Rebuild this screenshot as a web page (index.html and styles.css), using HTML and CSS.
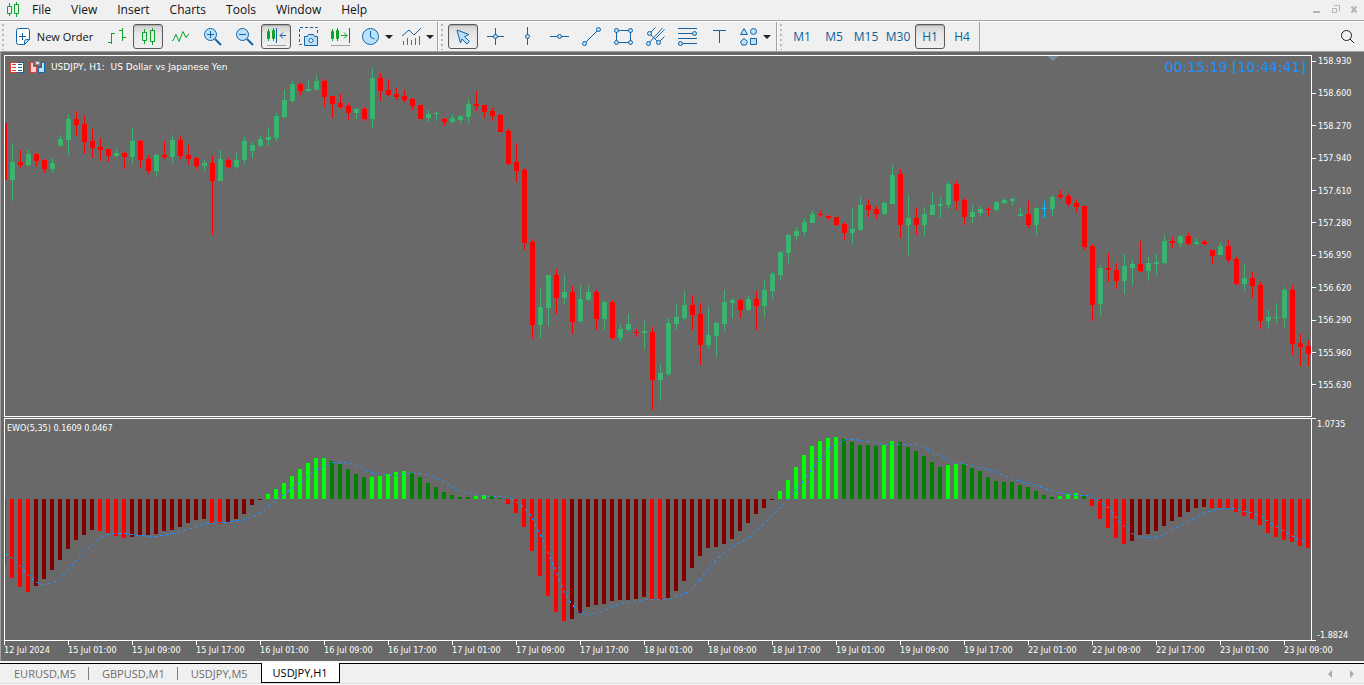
FILE: index.html
```html
<!DOCTYPE html>
<html lang="en">
<head>
<meta charset="utf-8">
<title>USDJPY, H1</title>
<link rel="stylesheet" href="styles.css">
</head>
<body>
<header class="menubar">
  <svg class="app-icon" width="14" height="15" viewBox="0 0 14 15"><path class="g" d="M3.5 1v3M3.5 12v2M10.5 0v2M10.5 12v3M1.5 4.5h4v7h-4zM8.500 2.500h4v9h-4z"/></svg>
  <nav class="menu">
    <button>File</button><button>View</button><button>Insert</button><button>Charts</button><button>Tools</button><button>Window</button><button>Help</button>
  </nav>
  <div class="window-controls">
    <button aria-label="Minimize"><svg width="9" height="9"><path d="M1 7h7" stroke-width="2"/></svg></button>
    <button aria-label="Restore"><svg width="9" height="9"><path d="M3 .5h5.500v6M1.500 3.500h4v4h-4z" /></svg></button>
    <button aria-label="Close"><svg width="9" height="9"><path d="M1.500 1.500l5 6M6.500 1.500l-5 6" stroke-width="2"/></svg></button>
  </div>
</header>

<div class="toolbar">
  <div class="group">
    <span class="grip"></span>
    <button class="tool new-order"><svg width="16" height="19" viewBox="0 0 16 19"><path class="b w" d="M3.500 1.500h9a2 2 0 0 1 2 2v9l-5 5h-6a2 2 0 0 1-2-2v-12a2 2 0 0 1 2-2z"/><path class="b f" d="M14.500 12.500h-3a2 2 0 0 0-2 2v3z"/><path class="b" d="M7.500 6v7M4 9.500h7"/></svg>New Order</button>
    <button class="tool" aria-label="Bar chart"><svg width="28" height="23"><path class="g" d="M9.500 8v11M6 17.500h3M10 8.500h3M20.500 3v13M17 5.500h3M21 12.500h3"/></svg></button>
    <button class="tool on" aria-label="Candlesticks"><svg width="28" height="23"><path class="g" d="M10.500 4v3M10.500 16v3M18.500 3v2M18.500 17v3M8.500 7.500h4v8h-4zM16.500 5.500h4v11h-4z"/></svg></button>
    <button class="tool" aria-label="Line chart"><svg width="28" height="23"><path class="g" d="M6 15.500h1l3-6 3 7 4-10 3 6 2-3h1"/></svg></button>
    <button class="tool" aria-label="Zoom in"><svg width="28" height="23"><path class="b t" d="M17 14l6 6"/><circle class="b f" cx="12.500" cy="9.500" r="6"/><path class="b" d="M9 9.500h7M12.500 6v7"/></svg></button>
    <button class="tool" aria-label="Zoom out"><svg width="28" height="23"><path class="b t" d="M17 14l6 6"/><circle class="b f" cx="12.500" cy="9.500" r="6"/><path class="b" d="M9 9.500h7"/></svg></button>
    <button class="tool on" aria-label="Auto scroll"><svg width="28" height="23"><path class="g" d="M6.500 4v12M11.500 3v13M5.500 6.500h2v7h-2zM10.500 5.500h2v8h-2z"/><path class="b" d="M14.500 3v15M18 10.500h6M21 7.500l-3 3 3 3"/><path class="line" d="M5 20.500h19"/></svg></button>
    <button class="tool" aria-label="Screenshot"><svg width="28" height="23"><path class="b dash" d="M23.500 8V2.500h-18v17H10"/><path class="b f" d="M10.500 11.500h3l1-2h5l1 2h3v9h-13z"/><circle class="b w" cx="17" cy="15.500" r="2"/></svg></button>
    <button class="tool" aria-label="Chart shift"><svg width="28" height="23"><path class="g" d="M6.500 4v12M11.500 3v13M5.500 6.500h2v7h-2zM10.500 5.500h2v8h-2zM15 10.500h6M18 7.500l3 3-3 3"/><path class="b" d="M23.500 3v15"/><path class="line" d="M5 20.500h19"/></svg></button>
    <button class="tool wide" aria-label="Periods"><svg width="36" height="23"><circle class="b f" cx="12.500" cy="11.500" r="8"/><path class="b" d="M12.500 6v6l4 2"/><path class="drop" d="M27 10h8l-4 4z"/></svg></button>
    <button class="tool wide" aria-label="Indicators"><svg width="36" height="23"><path class="b" d="M4 11l7-6 5 5 7-7"/><path class="g" d="M5.500 16v4M9.500 13v7M13.500 15v5M17.500 13v7M21.500 11v9"/><path class="drop" d="M28 10h8l-4 4z"/></svg></button>
  </div>
  <div class="group">
    <span class="grip"></span>
    <button class="tool on" aria-label="Cursor"><svg width="28" height="23"><path class="b f" d="M8 5l12 4.500-4.500 2 5 5-2.500 2.500-5-5-1.500 4z"/></svg></button>
    <button class="tool" aria-label="Crosshair"><svg width="28" height="23"><path class="b" d="M14.500 3v17M6 11.500h17"/><circle class="b f" cx="14.500" cy="11.500" r="2"/></svg></button>
    <button class="tool" aria-label="Vertical line"><svg width="28" height="23"><path class="b" d="M14.500 2v18"/><circle class="b f" cx="14.500" cy="11.500" r="2"/></svg></button>
    <button class="tool" aria-label="Horizontal line"><svg width="28" height="23"><path class="b" d="M5 11.500h19"/><circle class="b f" cx="14.500" cy="11.500" r="2"/></svg></button>
    <button class="tool" aria-label="Trendline"><svg width="28" height="23"><path class="b" d="M7.500 18.500l14-14"/><circle class="b f" cx="7.500" cy="18.500" r="2"/><circle class="b f" cx="21.500" cy="4.500" r="2"/></svg></button>
    <button class="tool" aria-label="Rectangle"><svg width="28" height="23"><path class="b" d="M7.500 5.500h14v12h-14z"/><circle class="b f" cx="7.500" cy="5.500" r="2"/><circle class="b f" cx="21.500" cy="5.500" r="2"/><circle class="b f" cx="7.500" cy="17.500" r="2"/><circle class="b f" cx="21.500" cy="17.500" r="2"/></svg></button>
    <button class="tool" aria-label="Pitchfork"><svg width="28" height="23"><path class="b" d="M8.500 8.500l6-6M7.500 18.500L21.500 3M17.500 17.500l6-6M8.500 8.500l9 9M14.500 13.500l9-9"/><circle class="b f" cx="8.500" cy="8.500" r="2"/><circle class="b f" cx="7.500" cy="18.500" r="2"/><circle class="b f" cx="17.500" cy="17.500" r="2"/></svg></button>
    <button class="tool" aria-label="Fibonacci"><svg width="28" height="23"><path class="b" d="M5 3.500h19M5 8.500h19M5 13.500h19M5 18.500h19"/><circle class="b f" cx="21.500" cy="8.500" r="2"/><circle class="b f" cx="7.500" cy="18.500" r="2"/></svg></button>
    <button class="tool" aria-label="Text"><svg width="28" height="23"><path class="b" d="M8 5.500h13M14.500 5v13"/></svg></button>
    <button class="tool wide" aria-label="Shapes"><svg width="36" height="23"><path class="b f" d="M7 3.500l3.500 6h-7zM7 13.500l3.500 3-1.500 3.500H5l-1.500-3.500zM13.500 13.500h6v6h-6z"/><circle class="b f" cx="16.500" cy="6.500" r="3"/><path class="drop" d="M26 10h8l-4 4z"/></svg></button>
  </div>
  <div class="group">
    <span class="grip"></span>
    <button class="tool">M1</button><button class="tool">M5</button><button class="tool">M15</button><button class="tool">M30</button><button class="tool on">H1</button><button class="tool">H4</button>
  </div>
  <button class="search" aria-label="Search"><svg width="16" height="16"><circle cx="6.500" cy="6.500" r="5"/><path d="M10 10l4 4"/></svg></button>
</div>

<main class="chart">
  <section class="row price">
    <div class="pane">
      <svg id="candles" class="plot" viewBox="5 56 1306 360" preserveAspectRatio="none"><path class="shift-mark" d="M1047 56h11l-5 5z"/></svg>
      <div class="title">
        <svg width="14" height="11" viewBox="0 0 14 11"><path fill="#d8413c" d="M0 0h7v11H0z"/><path fill="#1464a5" d="M7 0h7v11H7z"/><path fill="#fff" d="M1 1h12v9H1z"/><path stroke="#d8413c" d="M2 2.500h4M2 5.500h4M2 8.500h4"/><path stroke="#1464a5" d="M8 2.500h4M8 5.500h4M8 8.500h4"/></svg>
        <svg width="15" height="12" viewBox="0 0 15 12"><path fill="#f9d0ce" stroke="#d8413c" d="M.5 1.500h3v4h3v6h-6z"/><path fill="#b9e1fa" stroke="#1464a5" d="M8.500 11.500v-5h3v-5h3v10z"/><path fill="#ddd" stroke="#888" d="M5.500.5h4v3h-4z"/></svg>
        <h1>USDJPY, H1:&nbsp; US Dollar vs Japanese Yen</h1>
      </div>
      <div class="countdown">00:15:19 [10:44:41]</div>
    </div>
    <div class="axis"><span>158.930</span><span>158.600</span><span>158.270</span><span>157.940</span><span>157.610</span><span>157.280</span><span>156.950</span><span>156.620</span><span>156.290</span><span>155.960</span><span>155.630</span></div>
  </section>
  <section class="row indicator">
    <div class="pane">
      <svg id="oscillator" class="plot" viewBox="5 419 1306 221" preserveAspectRatio="none"></svg>
      <div class="title small">EWO(5,35) 0.1609 0.0467</div>
    </div>
    <div class="axis ends"><span>1.0735</span><span>-1.8824</span></div>
  </section>
  <div class="times"><span>12 Jul 2024</span><span>15 Jul 01:00</span><span>15 Jul 09:00</span><span>15 Jul 17:00</span><span>16 Jul 01:00</span><span>16 Jul 09:00</span><span>16 Jul 17:00</span><span>17 Jul 01:00</span><span>17 Jul 09:00</span><span>17 Jul 17:00</span><span>18 Jul 01:00</span><span>18 Jul 09:00</span><span>18 Jul 17:00</span><span>19 Jul 01:00</span><span>19 Jul 09:00</span><span>19 Jul 17:00</span><span>22 Jul 01:00</span><span>22 Jul 09:00</span><span>22 Jul 17:00</span><span>23 Jul 01:00</span><span>23 Jul 09:00</span></div>
</main>

<footer class="tabs">
  <button>EURUSD,M5</button><button>GBPUSD,M1</button><button>USDJPY,M5</button><button class="active">USDJPY,H1</button>
  <div class="scroll"><button aria-label="Scroll left"><svg width="5" height="8"><path d="M4 0v8L0 4z"/></svg></button><button aria-label="Scroll right"><svg width="5" height="8"><path d="M1 0v8l4-4z"/></svg></button></div>
</footer>
<script src="chart.js"></script>
</body>
</html>
```
FILE: styles.css
```css
* { box-sizing: border-box; }
body {
  margin: 0;
  height: 100vh;
  display: flex;
  flex-direction: column;
  overflow: hidden;
  background: #f0f0f0;
  color: #111;
  font: 12px/16px "Open Sans", "Noto Sans", sans-serif;
}
button {
  margin: 0;
  padding: 0;
  border: 0;
  background: none;
  color: inherit;
  font: inherit;
  white-space: nowrap;
}
svg { display: block; flex: none; fill: none; }

.menubar {
  display: flex;
  align-items: center;
  height: 21px;
  padding: 0 5px 1px 6px;
  border-bottom: 1px solid #a0a0a0;
}
.menu { display: flex; padding-left: 2px; }
.menu button { padding: 0 10px; }
.window-controls { display: flex; gap: 10px; margin-left: auto; }
.window-controls svg { stroke: #b4b4b4; }

.toolbar {
  display: flex;
  align-items: center;
  height: 31px;
  border-bottom: 1px solid #a0a0a0;
  border-top: 1px solid #fff;
}
.group {
  display: flex;
  align-items: center;
  gap: 2px;
  height: 29px;
  padding-right: 2px;
  border-right: 1px solid #a0a0a0;
}
.group + .group { border-left: 1px solid #fff; }
.grip {
  width: 2px;
  height: 26px;
  margin: 0 3px 0 2px;
  background: repeating-linear-gradient(#b8b8b8 0 2px, transparent 2px 5px);
}
.tool {
  display: flex;
  align-items: center;
  justify-content: center;
  width: 30px;
  height: 25px;
  border: 1px solid transparent;
  border-radius: 3px;
  color: #0b5f9f;
  font-size: 12px;
}
.tool.on {
  border-color: #5a5a5a;
  background: linear-gradient(#d2d2d2, #e8e8e8 40%, #f0f0f0);
  box-shadow: inset 0 1px 1px #a8a8a8;
}
.wide { width: 38px; }
.new-order { width: 90px; gap: 6px; color: #111; font-size: 11px; }
.b { stroke: #1464a5; }
.g { stroke: #0ba32a; }
.f { fill: #b9e1fa; }
.w { fill: #fff; }
.t { stroke-width: 2; }
.dash { stroke-dasharray: 3 2; }
.line { stroke: #a0a0a0; }
.drop { fill: #222; }
.search { margin-left: auto; padding-right: 8px; }
.search svg { stroke: #222; }

.chart {
  flex: 1;
  min-height: 0;
  display: flex;
  flex-direction: column;
  padding: 3px 0 0 3px;
  border-left: 1px solid #a0a0a0;
  background: #696969;
  color: #fff;
  font: 9px/12px "DejaVu Sans Condensed", "DejaVu Sans", sans-serif;
}
.row { display: flex; min-height: 0; }
.price { flex: 362 1 0; margin-bottom: 1px; }
.indicator { flex: 223 1 0; }
.pane {
  position: relative;
  flex: 1;
  min-width: 0;
  border: 1px solid #fff;
}
.plot { width: 100%; height: 100%; shape-rendering: crispEdges; }
.up { fill: #3cb371; }
.down { fill: #f00; }
.flat { fill: #00bfff; }
.rise { fill: #0f0; }
.rise-weak { fill: #008000; }
.fall { fill: #f00; }
.fall-weak { fill: #800000; }
.signal { stroke: #1e90ff; stroke-dasharray: 3 3; }
.shift-mark { fill: #778899; }
.title {
  position: absolute;
  top: 5px;
  left: 5px;
  display: flex;
  align-items: center;
  gap: 6px;
}
.title.small { top: 3px; left: 2px; }
.title h1 { margin: 0; font: 9px/12px "DejaVu Sans", sans-serif; }
.countdown {
  position: absolute;
  top: 3px;
  right: 5px;
  color: #1e90ff;
  font: 14px/16px "DejaVu Sans", sans-serif;
}
.axis {
  display: flex;
  flex-direction: column;
  justify-content: space-between;
  width: 52px;
  padding-bottom: 26px;
}
.axis span { display: flex; align-items: center; gap: 2px; }
.axis span::before { content: ""; width: 4px; height: 1px; background: #fff; }
.axis.ends { padding-bottom: 0; }
.axis.ends span { gap: 1px; height: 12px; }
.axis.ends span::before { align-self: flex-start; }
.axis.ends span:last-child::before { align-self: flex-end; }
.times { display: flex; height: 20px; overflow: hidden; }
.times span {
  flex: none;
  width: 64px;
  white-space: nowrap;
  padding-top: 3px;
  background: linear-gradient(#fff, #fff) 0 0 / 1px 4px no-repeat;
}

.tabs {
  display: flex;
  align-items: flex-start;
  height: 24px;
  border-top: 2px solid #f8f8f8;
  background: linear-gradient(#000 0 1px, transparent 1px 20px, #dcdcdc 20px 21px, #fafafa 21px);
  color: #6e6e6e;
  font-size: 11px;
}
.tabs > button {
  height: 20px;
  padding: 1px 13px 0;
  background: linear-gradient(#808080, #808080) 100% 60% / 1px 13px no-repeat;
}
.tabs > button:first-child { padding-left: 14px; }
.tabs > button:nth-child(3) { background: none; }
.tabs > .active {
  padding: 0 11px;
  border: 1px solid #000;
  border-width: 0 1px 1px;
  background: #fff;
  color: #000;
}
.scroll { display: flex; gap: 16px; margin: 7px 10px 0 auto; }
.scroll svg { fill: #aaa; }
```
FILE: chart.js
```js
const NS = "http://www.w3.org/2000/svg";
const STEP = 8;

// One candle per entry: kind, high, body top, body bottom, low.
const candles = `d123,123,180,180 u143,162,180,201 d150,162,165,168 u150,154,165,166 d153,154,161,166 d159,160,169,173 u158,163,169,173 u135,139,146,146
u114,119,140,155 d111,119,125,136 d116,124,142,154 d129,141,148,158 d138,147,150,161 d149,149,156,162 u149,153,156,157 d152,153,157,169
u128,141,157,164 d140,141,160,168 d155,159,171,174 u154,155,171,177 d141,155,157,159 u135,140,157,163 d136,140,156,159 d145,155,159,165
d157,158,166,169 u160,163,166,171 d156,163,181,235 u150,159,181,181 d158,160,167,168 u153,160,167,169 u137,141,160,164 u142,145,151,158
u136,139,146,147 u127,137,140,146 u113,116,138,142 u90,100,117,118 u81,84,101,103 d83,84,91,95 u81,89,91,92 u75,81,90,90
d79,81,97,107 d96,96,104,118 d94,103,107,109 d103,106,113,120 u108,109,113,119 d107,109,119,121 u68,78,119,128 d73,78,91,101
d79,90,95,96 d88,94,97,100 d90,96,100,102 d98,99,106,110 d105,105,119,119 u110,114,118,122 u112,113,114,121 d118,119,122,126
u114,118,122,123 u115,116,120,123 u99,104,117,123 d91,104,106,111 d105,105,112,118 d108,111,116,121 d114,115,132,132 d129,131,164,165
d143,162,171,182 d168,170,243,250 d239,242,325,339 u289,307,325,338 u275,275,308,326 d269,275,298,314 u275,292,298,304 d286,292,322,334
u285,299,321,323 u285,292,300,301 d290,292,319,330 u301,302,319,330 d300,302,338,340 u324,329,338,342 u314,324,330,332 d329,332,333,337
u321,331,333,349 d327,332,380,410 u364,373,380,401 u318,323,374,376 u304,317,324,330 u291,305,318,320 d295,305,315,330 d303,314,345,365
u307,335,345,349 u322,323,336,357 u290,302,324,331 u298,300,303,318 d299,300,310,318 u296,299,310,311 d291,299,306,330 u280,290,306,317
u272,274,291,299 u251,252,275,280 u234,235,253,263 u227,231,236,241 u218,222,232,236 u210,214,223,223 d211,214,215,217 d215,216,218,220
d217,217,225,226 d222,224,233,240 u209,229,233,244 u197,205,230,231 d199,205,210,217 d206,209,214,219 u202,203,214,215 u165,175,204,204
d169,174,225,238 u195,218,225,255 d208,218,225,235 u207,214,225,236 u193,205,215,215 u197,204,206,218 u182,184,205,209 d181,184,201,210
d198,200,217,225 u205,212,217,223 u206,209,213,217 d207,209,210,216 u201,202,210,212 u198,200,203,204 u198,199,201,206 u208,214,216,217
d201,214,225,228 u207,208,225,235 f201,208,209,218 u195,197,209,216 d190,195,197,199 d194,196,204,206 d199,203,207,212 d206,206,247,250
d244,246,305,321 u265,268,304,315 d253,268,270,282 d263,270,281,289 u254,266,281,294 u260,264,268,285 d241,264,271,272 u257,263,271,281
u254,262,264,275 u235,241,263,264 d237,241,243,248 u235,236,243,247 d233,236,244,245 u238,242,244,245 d240,242,244,245 d250,250,256,264
u242,246,255,255 d240,246,260,262 d257,259,284,285 u264,278,284,291 d272,278,286,298 d282,285,321,329 u310,317,321,329 u303,317,318,323
u287,290,318,327 d285,290,344,355 d334,343,347,366 d340,346,354,366`.split(/\s+/);

// Runs of histogram bars that share a colour; each number is the bar's outer edge.
const ZERO = 499;
const bars = [
  ["fall", [566, 578, 587, 592]],
  ["fall-weak", [586, 579, 570, 560, 549, 540, 535, 530]],
  ["fall", [531, 533, 536, 538]],
  ["fall-weak", [537, 535, 535, 534, 531, 530, 527, 523, 520, 519]],
  ["fall", [523, 524]],
  ["fall-weak", [522, 519, 514, 505, 500]],
  ["rise", [494, 489, 483, 476, 469, 463, 458, 458]],
  ["rise-weak", [461, 464, 469, 474, 477]],
  ["rise", [477, 476, 474, 472, 471]],
  ["rise-weak", [473, 477, 483, 487, 492, 495, 497, 497]],
  ["rise", [496, 495]],
  ["rise-weak", [496, 498]],
  ["fall", [504, 513, 527, 551, 576, 596, 612, 621]],
  ["fall-weak", [619, 613, 607, 605, 604, 601, 600, 600, 599, 597]],
  ["fall", [599, 600]],
  ["fall-weak", [598, 591, 581, 568, 556, 548, 547, 544, 539, 531, 523, 514, 508, 500]],
  ["rise", [491, 480, 467, 455, 446, 441, 438, 437]],
  ["rise-weak", [439, 442, 445, 445, 446]],
  ["rise", [445, 441]],
  ["rise-weak", [442, 447, 451, 456, 462, 467]],
  ["rise", [465, 464]],
  ["rise-weak", [464, 468, 471, 477, 481, 482, 482, 485, 487, 491, 495, 497]],
  ["rise", [496, 494, 493]],
  ["rise-weak", [496]],
  ["fall", [506, 519, 528, 538, 544]],
  ["fall-weak", [541, 535, 534, 531, 526, 521, 517, 512, 508, 507]],
  ["fall", [508, 508, 509, 512, 516, 519, 525, 533, 537, 540, 542, 546, 548]]
];

const signal = `5,554 12,558 18,564 28,575 36,582 40,584 47,584 53,583 59,578 65,573 71,567 76,561 81,555 87,549 93,544 99,538 105,535 112,534 120,533 127,534 133,535 147,536 157,536 163,535 170,534 177,533 182,531 189,529 195,527 201,525 207,523 213,523 230,522 243,520 255,516 262,512 267,507 273,503 278,499 285,494 291,489 297,485 302,481 308,476 314,471 321,468 327,465 333,462 339,462
344,462 350,463 356,466 362,468 368,471 374,473 380,474 387,475 400,475 412,473 422,474 428,475 434,477 440,480 447,484 452,487 458,490 464,492 470,493 477,495 483,496 500,496 507,497 513,500 518,503 524,508 530,514 534,522 539,532 544,543 548,553 555,569 560,582 565,593 572,604 578,611 584,613 589,615 596,613 602,611 608,609 613,606 620,604 632,602 643,600 653,599 668,599 679,596
685,594 692,589 697,583 702,577 707,571 712,565 717,559 723,554 729,549 736,545 742,542 748,538 754,533 760,527 766,522 772,516 778,510 783,504 789,499 794,492 799,486 804,480 808,474 812,469 818,462 823,455 828,450 833,446 839,443 845,440 852,439 858,440 870,442 882,444 893,444 912,444 918,445 924,447 930,451 936,454 942,457 948,460 954,462 965,464 977,467 983,468 990,470 996,472 1002,475 1008,477 1013,479 1019,481
1027,483 1032,484 1038,486 1043,488 1050,490 1057,492 1067,494 1073,495 1087,495 1092,497 1098,500 1103,504 1109,508 1114,515 1119,521 1125,527 1131,533 1137,536 1142,537 1148,538 1155,537 1161,536 1167,533 1172,530 1178,527 1184,524 1190,521 1197,517 1202,514 1208,512 1215,510 1227,508 1232,508 1243,511 1252,513 1257,515 1263,518 1268,521 1273,525 1279,528 1285,532 1292,536 1297,539 1303,541 1307,543`;

function add(parent, name, attrs) {
  const node = document.createElementNS(NS, name);
  for (const key in attrs) node.setAttribute(key, attrs[key]);
  parent.appendChild(node);
}

const kinds = { u: "up", d: "down", f: "flat" };
const priceSvg = document.getElementById("candles");
candles.forEach((text, i) => {
  const cls = kinds[text[0]];
  const [high, top, bottom, low] = text.slice(1).split(",").map(Number);
  const x = 2 + i * STEP;
  add(priceSvg, "rect", { class: cls, x: x, y: top, width: 5, height: bottom - top });
  add(priceSvg, "rect", { class: cls, x: x + 2, y: high, width: 1, height: low - high });
});

const oscSvg = document.getElementById("oscillator");
let x = 2;
for (const [cls, edges] of bars) {
  for (const edge of edges) {
    add(oscSvg, "rect", { class: cls, x: x, y: Math.min(edge, ZERO), width: 4, height: Math.abs(edge - ZERO) });
    x += STEP;
  }
}
add(oscSvg, "polyline", { class: "signal", points: signal });
```
